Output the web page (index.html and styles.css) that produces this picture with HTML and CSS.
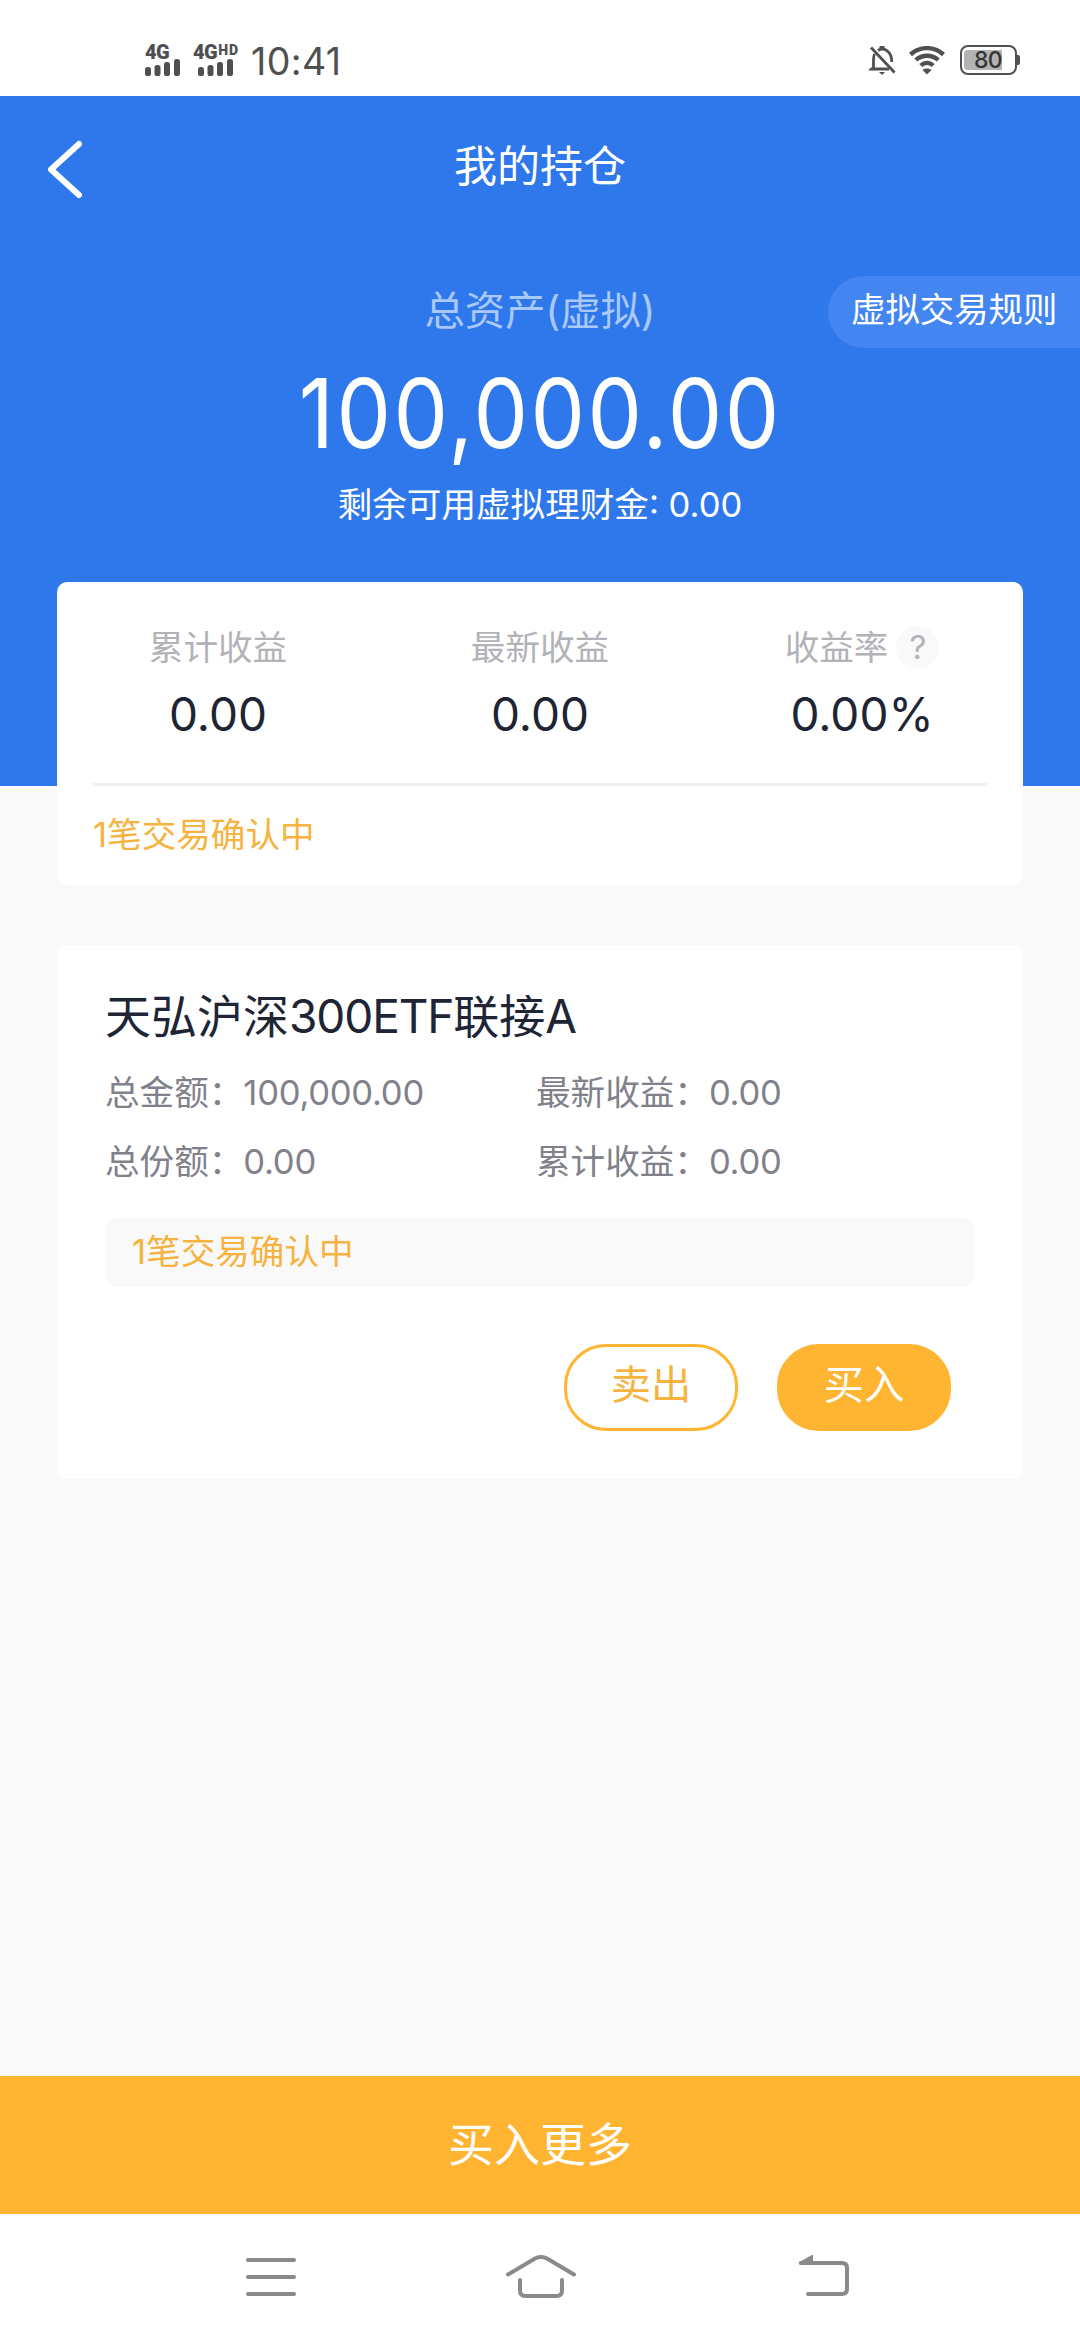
FILE: index.html
```html
<!DOCTYPE html>
<html lang="zh-CN">
<head>
<meta charset="utf-8">
<title>我的持仓</title>
<link rel="stylesheet" href="styles.css">
</head>
<body>
<div class="screen">
  <div class="status">
    <div class="status-left">
      <div class="sim">
        <span class="net">4G</span>
        <svg class="bars" width="36" height="17" viewBox="0 0 36 17"><rect x="0" y="8" width="6" height="9" rx="2.6"/><rect x="9.5" y="6" width="6" height="11" rx="2.6"/><rect x="19" y="3" width="6" height="14" rx="2.6"/><rect x="29" y="0" width="6" height="17" rx="2.6"/></svg>
      </div>
      <div class="sim sim-hd">
        <span class="net">4G<span class="hd">HD</span></span>
        <svg class="bars" width="36" height="17" viewBox="0 0 36 17"><rect x="0" y="8" width="6" height="9" rx="2.6"/><rect x="9.5" y="6" width="6" height="11" rx="2.6"/><rect x="19" y="3" width="6" height="14" rx="2.6"/><rect x="29" y="0" width="6" height="17" rx="2.6"/></svg>
      </div>
      <span class="clock">10:41</span>
    </div>
    <div class="status-right">
      <svg class="bell" width="28" height="32" viewBox="0 0 28 32" fill="none" stroke="#505050" stroke-width="2.8"><path d="M2 2.500L25.500 27.500"/><path d="M5.500 9C4.600 11 4.500 13 4.500 15V22.500L2.500 24H20"/><path d="M9 5.500C15 1.500 23 6.500 22.700 17"/><path d="M10.500 2.500H15.500" stroke-width="3"/><path d="M10 27H16L13 30Z" fill="#505050" stroke="none"/></svg>
      <svg class="wifi" width="36" height="29" viewBox="0 0 36 29" fill="none" stroke="#505050" stroke-width="4.4"><path d="M1.500 8.500C11 0 25 0 34.500 8.500"/><path d="M6.800 14C13 8.300 23 8.300 29.200 14"/><path d="M11.800 19.500C15.500 16 20.500 16 24.200 19.500"/><path d="M13.500 24C16 22 20 22 22.500 24L18 28.500Z" fill="#505050" stroke="none"/></svg>
      <div class="battery"><div class="level">80</div></div>
      <div class="nub"></div>
    </div>
  </div>

  <header class="hero">
    <div class="nav">
      <svg class="back" width="40" height="62" viewBox="0 0 40 62" fill="none" stroke="#fff" stroke-width="6" stroke-linecap="round" stroke-linejoin="round"><path d="M34 5L6 30.500L34 56"/></svg>
      <h1 class="title">我的持仓</h1>
    </div>
    <div class="asset-head">
      <span class="asset-label">总资产(虚拟)</span>
      <a class="rules">虚拟交易规则</a>
    </div>
    <div class="total"><span class="total-num">100,000.00</span></div>
    <div class="remain">剩余可用虚拟理财金: 0.00</div>
  </header>

  <main class="content">
    <section class="card summary">
      <div class="stats">
        <div class="stat"><span class="stat-label">累计收益</span><span class="stat-value">0.00</span></div>
        <div class="stat"><span class="stat-label">最新收益</span><span class="stat-value">0.00</span></div>
        <div class="stat"><span class="stat-label">收益率<i class="help">?</i></span><span class="stat-value">0.00%</span></div>
      </div>
      <div class="pending">1笔交易确认中</div>
    </section>

    <section class="card fund">
      <h2 class="fund-name">天弘沪深<span class="latin">300ETF</span>联接A</h2>
      <div class="details">
        <span>总金额：<span class="num">100,000.00</span></span><span>最新收益：<span class="num">0.00</span></span>
        <span>总份额：<span class="num">0.00</span></span><span>累计收益：<span class="num">0.00</span></span>
      </div>
      <div class="notice">1笔交易确认中</div>
      <div class="actions">
        <button class="btn sell">卖出</button>
        <button class="btn buy">买入</button>
      </div>
    </section>
  </main>

  <button class="more">买入更多</button>

  <footer class="sysnav">
    <svg class="ico-menu" width="50" height="38" viewBox="0 0 50 38" fill="none" stroke="#8a8a8a" stroke-width="4" stroke-linecap="round"><path d="M2 2H48M2 19H48M2 36H48"/></svg>
    <svg class="ico-home" width="70" height="44" viewBox="0 0 70 44" fill="none" stroke="#8a8a8a" stroke-width="4" stroke-linecap="round" stroke-linejoin="round"><path d="M2 19.500L29 3.500Q35 0.500 41 3.500L68 19.500"/><path d="M14 25V35.500Q14 41 19.500 41H50.500Q56 41 56 35.500V25"/></svg>
    <svg class="ico-back" width="52" height="44" viewBox="0 0 52 44" fill="none" stroke="#8a8a8a" stroke-width="4" stroke-linecap="round"><path d="M3 8H44Q49 8 49 13V34Q49 39 44 39H10"/><path d="M0.500 7.500L14 0H15V10H2Z" fill="#8a8a8a" stroke="none"/></svg>
  </footer>
</div>
</body>
</html>
```
FILE: styles.css
```css
* { box-sizing: border-box; }

body {
  margin: 0;
  background: #f9f9f9;
  font-family: Inter, "Noto Sans CJK SC", sans-serif;
  font-size: 34.6px;
}

h1, h2 { margin: 0; font-weight: 400; }
button { border: 0; padding: 0; font-family: inherit; font-weight: 400; }

.screen {
  display: flex;
  flex-direction: column;
  width: 1080px;
  height: 2340px;
}

/* status bar */
.status {
  display: flex;
  justify-content: space-between;
  height: 96px;
  padding: 45px 60px 0 145px;
  background: #fff;
  color: #505050;
}
.status-left, .status-right { display: flex; align-items: flex-start; }
.sim { display: flex; flex-direction: column; width: 48px; }
.sim-hd { width: 58px; }
.sim-hd .bars { margin-left: 5px; }
.net {
  display: flex;
  height: 14px;
  font-family: Roboto, sans-serif;
  font-size: 20px;
  font-weight: 900;
  line-height: 15px;
  letter-spacing: -0.5px;
}
.hd {
  margin-left: 1px;
  font-size: 14px;
  line-height: 10px;
  letter-spacing: 0.9px;
}
.bars { fill: #505050; }
.clock {
  font-size: 37.5px;
  line-height: 34px;
  letter-spacing: 0.4px;
}
.bell { margin: 0 12px 0 0; }
.wifi { margin: 1px 15px 0 0; }
.battery {
  width: 57px;
  height: 30px;
  padding: 3px 2px;
  border: 2px solid #505050;
  border-radius: 8px;
}
.level {
  width: 38px;
  height: 20px;
  padding-left: 10px;
  border-radius: 4px 0 0 4px;
  background: #b3b3b3;
  color: #333;
  font-size: 23px;
  font-weight: 500;
  line-height: 20px;
  letter-spacing: -0.7px;
}
.nub {
  width: 3px;
  height: 10px;
  margin-top: 10px;
  border-radius: 0 2px 2px 0;
  background: #505050;
}

/* blue header */
.hero {
  display: flex;
  flex-direction: column;
  height: 690px;
  flex: none;
  background: #2f78eb;
  color: #fff;
  text-align: center;
}
.nav {
  display: grid;
  grid-template-columns: 120px 1fr 120px;
  height: 137px;
}
.back { margin: 43px 0 0 45px; }
.title { font-size: 43px; line-height: 140px; }
.asset-head {
  display: grid;
  grid-template-columns: 1fr 576px 1fr;
  align-items: center;
  height: 72px;
  margin-top: 43px;
}
.asset-label {
  grid-column: 2;
  color: #a9c9fb;
  font-size: 40.3px;
  line-height: 70px;
  padding-bottom: 2px;
}
.rules {
  height: 72px;
  padding: 0 0 0 23px;
  border-radius: 36px 0 0 36px;
  background: #4386f1;
  font-size: 34.4px;
  line-height: 68px;
  text-align: left;
  white-space: nowrap;
}
.total { height: 132px; font-size: 96px; line-height: 131px; }
.total-num {
  display: inline-block;
  letter-spacing: 2.8px;
  transform: scaleX(0.9);
}
.remain { line-height: 48px; }

/* cards */
.content {
  display: flex;
  flex-direction: column;
  flex: 1;
  gap: 60px;
  margin-top: -204px;
  padding: 0 57px;
}
.card { border-radius: 10px; background: #fff; }
.summary { height: 303px; }
.stats {
  display: grid;
  grid-template-columns: repeat(3, 1fr);
  height: 201px;
  padding-top: 41px;
}
.stat { display: flex; flex-direction: column; align-items: center; }
.stat-label {
  display: flex;
  align-items: center;
  height: 50px;
  line-height: 46px;
  padding-bottom: 2px;
  color: #b2b3b8;
}
.help {
  width: 43px;
  height: 43px;
  margin-left: 8px;
  border-radius: 50%;
  background: #f9f9f9;
  font-size: 33px;
  font-style: normal;
  line-height: 43px;
  text-align: center;
}
.stat-value { color: #202536; font-size: 46px; line-height: 82px; }
.pending {
  margin: 0 36px;
  border-top: 3px solid #efeff4;
  color: #f6b340;
  line-height: 96px;
}
.fund { height: 534px; padding: 43px 48px 0; }
.fund-name { color: #202536; font-size: 46px; line-height: 56px; }
.latin { letter-spacing: -1.1px; }
.details {
  display: grid;
  grid-template-columns: 431px 1fr;
  margin-top: 14px;
  color: #80818a;
  line-height: 69px;
}
.num { letter-spacing: -0.25px; }
.notice {
  height: 69px;
  margin-top: 22px;
  padding-left: 27px;
  border-radius: 12px;
  background: #f9f9f9;
  color: #f6b340;
  line-height: 66px;
}
.actions {
  display: flex;
  justify-content: flex-end;
  gap: 39px;
  margin: 57px 24px 0 0;
}
.btn {
  width: 174px;
  height: 87px;
  padding-bottom: 5px;
  border: 3px solid #ffb432;
  border-radius: 42px;
  font-size: 40.3px;
  line-height: 76px;
}
.sell { background: #fff; color: #f6b340; }
.buy { background: #ffb432; color: #fff; }

.more {
  flex: none;
  height: 138px;
  padding-bottom: 1px;
  background: #ffb432;
  color: #fff;
  font-size: 46px;
  line-height: 137px;
}

/* system navigation */
.sysnav {
  display: grid;
  grid-template-columns: 1fr 70px 1fr;
  flex: none;
  height: 126px;
  padding-top: 41px;
  background: #fff;
}
.ico-menu { margin: 3px 0 0 246px; }
.ico-home { margin-left: 1px; }
.ico-back { margin-left: 223px; }
```
